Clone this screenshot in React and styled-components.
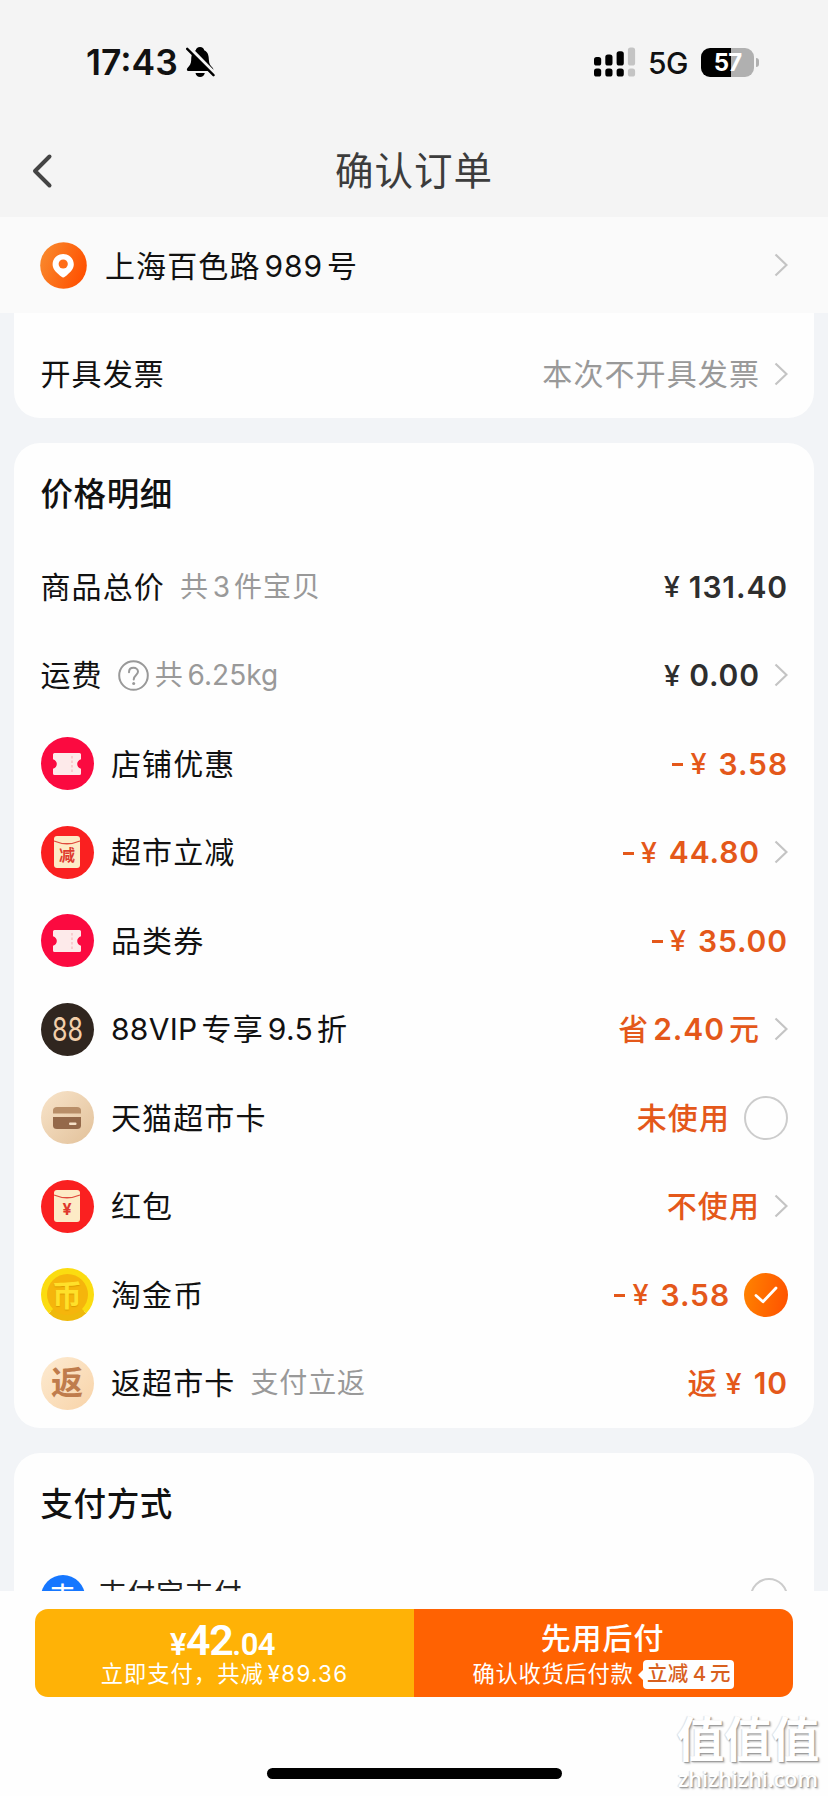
import React from "react";
import styled, { createGlobalStyle } from "styled-components";

const GlobalStyle = createGlobalStyle`
  * {
    box-sizing: border-box;
  }

  body {
    margin: 0;
    background: #f2f4f7;
    color: #111;
    font-family: Inter, "Noto Sans CJK SC", sans-serif;
  }
`;

const Screen = styled.div`
  position: relative;
  display: flex;
  flex-direction: column;
  width: 828px;
  height: 1796px;
  overflow: hidden;
`;

const Header = styled.header`
  height: 217px;
  background: #f4f4f4;
`;

const StatusBar = styled.div`
  display: flex;
  align-items: center;
  height: 124px;
  padding: 0 69px 0 86px;
`;

const Time = styled.span`
  width: 100px;
  padding-top: 1px;
  font-size: 35.5px;
  font-weight: 600;
  line-height: 1;
  white-space: nowrap;
`;

const StatusRight = styled.div`
  display: flex;
  align-items: center;
  margin-left: auto;
`;

const Network = styled.span`
  width: 53px;
  margin-left: 12px;
  padding-top: 1px;
  font-size: 30px;
  font-weight: 500;
  line-height: 1;
  letter-spacing: -0.6px;
`;

const Battery = styled.span`
  width: 53px;
  height: 29px;
  border-radius: 9px;
  background: linear-gradient(90deg, #000 57%, #b0b0b0 57%);
  color: #fff;
  font-size: 24px;
  font-weight: 700;
  line-height: 29px;
  text-align: center;
  letter-spacing: -0.8px;
`;

const BatteryTip = styled.span`
  width: 3px;
  height: 9px;
  margin-left: 2px;
  border-radius: 0 3px 3px 0;
  background: #b0b0b0;
`;

const NavBar = styled.div`
  display: grid;
  grid-template-columns: 60px 1fr 60px;
  align-items: center;
  height: 93px;
  padding: 0 31px;
`;

const NavTitle = styled.h1`
  margin: 0;
  padding-top: 2px;
  color: #3c3c3c;
  font-size: 38.5px;
  font-weight: 400;
  line-height: 1;
  letter-spacing: 1px;
  text-align: center;
`;

const AddressBar = styled.div`
  display: flex;
  align-items: center;
  height: 96px;
  padding: 0 40px;
  background: #fafafa;
`;

const AddressText = styled.span`
  margin: 1px 0 0 18px;
  font-size: 30px;
  line-height: 1;
  letter-spacing: 1.1px;
`;

const Content = styled.main`
  display: flex;
  flex: 1;
  flex-direction: column;
  gap: 25px;
  min-height: 0;
  padding: 0 14px 0 13.5px;
  overflow: hidden;
`;

const Card = styled.section`
  flex: none;
  padding: ${props => (props.$continued ? "17px 26px 1px" : "0 26px 0.5px")} 27px;
  border-radius: ${props => (props.$continued ? "0 0 26px 26px" : "26px")};
  background: #fefefe;
`;

const CardTitle = styled.h2`
  display: flex;
  align-items: center;
  height: 99.5px;
  margin: 0;
  padding-top: 4px;
  font-size: 32.5px;
  font-weight: 500;
  line-height: 1;
  letter-spacing: 0.6px;
`;

const Row = styled.div`
  display: flex;
  align-items: center;
  height: ${props => props.$height || 88.5}px;
`;

const Label = styled.span`
  font-size: 30px;
  line-height: 1;
  letter-spacing: 1.1px;
  white-space: nowrap;
`;

const PayName = styled(Label)`
  margin-bottom: 6px;
  color: #222;
  font-size: 28px;
  letter-spacing: 0.8px;
`;

const Note = styled.span`
  display: flex;
  align-items: center;
  margin-left: 15px;
  color: #999;
  font-size: 28px;
  line-height: 1;
  letter-spacing: 0.9px;
`;

// Latin run set between Chinese characters
const Latin = styled.span`
  margin-left: ${props => (props.$start ? 0 : 4)}px;
  margin-right: ${props => (props.$end ? 0 : 4)}px;
  letter-spacing: ${props => props.$tracking || 0}px;
`;

const Value = styled.span`
  display: flex;
  align-items: center;
  margin-left: auto;
  color: ${props =>
    ({ dark: "#2e2e2e", muted: "#999" }[props.$tone] || "#e4581a")};
  font-size: 30px;
  font-weight: ${props => (props.$tone === "muted" ? 400 : 500)};
  line-height: 1;
  letter-spacing: 1.1px;
  white-space: nowrap;
`;

const Digits = styled.span`
  font-size: 30px;
  font-weight: 600;
  letter-spacing: 0.9px;
`;

const Minus = styled.span`
  width: 11px;
  height: 3px;
  margin: 2px 7px 0 0;
  background: currentColor;
`;

const Yen = styled.span`
  margin-right: ${props => props.$gap}px;
  font-size: 29px;
  font-weight: 500;
  letter-spacing: 0;
`;

const Badge = styled.span`
  display: flex;
  align-items: center;
  justify-content: center;
  width: ${props => props.$size || 53}px;
  height: ${props => props.$size || 53}px;
  margin-right: ${props => props.$gap || 17.5}px;
  flex: none;
  border-radius: 50%;
  background: ${props => props.$bg};
  color: ${props => props.$color};
  font-size: ${props => props.$font}px;
  font-weight: ${props => props.$weight || 500};
  line-height: 1;
`;

const Coin = styled(Badge)`
  border: 6px solid #fbdc10;
  border-bottom-color: #efb90c;
  text-shadow: 0 1px 1px #dc9c00;
`;

const Condensed = styled.span`
  transform: scaleX(0.76);
`;

const Radio = styled.span`
  display: flex;
  align-items: center;
  justify-content: center;
  width: ${props => props.$size || 44}px;
  height: ${props => props.$size || 44}px;
  margin-left: 14px;
  border: ${props => (props.$checked ? "0" : "2px solid #ccc")};
  border-radius: 50%;
  background: ${props =>
    props.$checked ? "linear-gradient(100deg, #ff8400, #ff5000)" : "none"};
`;

const Footer = styled.footer`
  height: 205px;
  padding: 18px 35px 0;
  background: #fefefe;
`;

const PayButtons = styled.div`
  display: flex;
  height: 88px;
  border-radius: 13px;
  overflow: hidden;
`;

const PayButton = styled.button`
  display: flex;
  flex: 1;
  flex-direction: column;
  align-items: center;
  padding: 0;
  border: 0;
  background: ${props => props.$bg};
  color: #fff;
  font-family: inherit;
`;

const Price = styled.span`
  display: flex;
  align-items: baseline;
  height: 50px;
  margin-left: -4px;
  padding-top: 13px;
  font-family: Roboto, sans-serif;
  font-size: 31px;
  font-weight: 600;
  line-height: 37px;
  letter-spacing: -0.5px;

  b {
    font-size: 43px;
    font-weight: 600;
    letter-spacing: -1.4px;
  }
`;

const PayLater = styled.span`
  height: 50px;
  margin-left: -2px;
  font-size: 30px;
  font-weight: 500;
  line-height: 59px;
  letter-spacing: 0.9px;
`;

const PayHint = styled.span`
  display: flex;
  align-items: center;
  height: 30px;
  font-size: 22.3px;
  line-height: 1;
  letter-spacing: ${props => props.$tracking || 0.7}px;
  white-space: nowrap;
`;

const Tag = styled.span`
  position: relative;
  display: flex;
  align-items: center;
  justify-content: center;
  width: 91px;
  height: 29px;
  margin-left: 10px;
  border-radius: 4px;
  background: #fff;
  color: #d8601e;
  font-size: 20.5px;
  font-weight: 500;
  letter-spacing: 0.3px;

  &::before {
    content: "";
    position: absolute;
    left: -5px;
    top: 10px;
    border: 5px solid transparent;
    border-left-width: 0;
    border-right-color: #fff;
  }
`;

const HomeIndicator = styled.div`
  width: 295px;
  height: 11px;
  margin: 71px auto 0;
  border-radius: 6px;
  background: #000;
`;

const Watermark = styled.div`
  position: absolute;
  right: 9px;
  bottom: 3px;
  display: flex;
  flex-direction: column;
  align-items: center;
  width: 142px;
  color: #fff;
  font-size: 47.5px;
  font-weight: 700;
  line-height: 50px;
  white-space: nowrap;
  text-shadow: 1px 1px 1px #999, 2px 2px 2px #ccc, -1px 0 1px #ddd;

  small {
    font-family: "Open Sans", sans-serif;
    font-size: 21.5px;
    font-weight: 600;
    line-height: 28px;
  }
`;

function Chevron() {
  return (
    <svg width="14" height="24" fill="none" style={{ marginLeft: 14 }}>
      <path d="M1.5 1.5L12.5 12L1.5 22.5" stroke="#c4c4c4" strokeWidth="2.2" />
    </svg>
  );
}

function BellOff() {
  return (
    <svg width="29" height="32" viewBox="0 0 29 32">
      <path
        d="M14 1C11.5 1 10 2.7 9.8 4.2C5.8 6 5.3 10 5.2 14C5.1 18 3.7 19.6 1.9 21.4C0.2 23.3 0.8 25 2.8 25H25.4C27.4 25 28 23.3 26.4 21.4C24.4 19.5 23 17.8 22.9 14C22.8 10 22.2 6 18.2 4.2C18 2.7 16.5 1 14 1Z"
        fill="#000"
      />
      <path d="M9.5 27H18.8C18.2 29.5 16.5 31 14.1 31S10 29.5 9.5 27Z" fill="#000" />
      <path d="M1 -0.5L30 29" stroke="#f4f4f4" strokeWidth="4" />
      <path d="M1.2 2.8L27.5 29.2" stroke="#000" strokeWidth="2.4" strokeLinecap="round" />
    </svg>
  );
}

const bars = [
  [0, 10, "#000"],
  [11.3, 7.5, "#000"],
  [22.6, 4.2, "#000"],
  [33.9, 0.5, "#c4c4c4"]
];

function Signal() {
  return (
    <svg width="42" height="30">
      {bars.map(([x, y, fill]) => (
        <g key={x} fill={fill}>
          <rect x={x} y={y} width="7.2" height={18.5 - y} rx="2.6" />
          <rect x={x} y="21.5" width="7.2" height="8" rx="2.6" />
        </g>
      ))}
    </svg>
  );
}

function BackIcon() {
  return (
    <svg width="22" height="36" fill="none">
      <path
        d="M18.5 3.5L4 18L18.5 32.5"
        stroke="#444"
        strokeWidth="4"
        strokeLinecap="round"
        strokeLinejoin="round"
      />
    </svg>
  );
}

function PinIcon() {
  return (
    <svg width="47" height="47">
      <defs>
        <linearGradient id="pin" x1="0" y1="0.2" x2="1" y2="0.6">
          <stop offset="0" stopColor="#f98a2e" />
          <stop offset="1" stopColor="#ff5000" />
        </linearGradient>
      </defs>
      <circle cx="23.5" cy="23.5" r="23.3" fill="url(#pin)" />
      <path
        d="M23.2 12C17.2 12 12.6 16.6 12.6 22.3C12.6 27.2 16 30.2 18.8 32.6C20.6 34.2 22 35.6 23.2 35.6S25.8 34.2 27.6 32.6C30.4 30.2 33.8 27.2 33.8 22.3C33.8 16.6 29.2 12 23.2 12Z"
        fill="#fff"
      />
      <circle cx="23.2" cy="22" r="4.6" fill="#ff6d17" />
    </svg>
  );
}

function HelpIcon() {
  return (
    <svg width="31" height="31" fill="none" stroke="#999" strokeWidth="2">
      <circle cx="15.5" cy="15.5" r="14.3" />
      <path
        d="M11 12.2C11 9.4 12.9 7.8 15.5 7.8S20 9.5 20 11.8C20 14.8 15.7 15.2 15.7 19.4"
        strokeLinecap="round"
      />
      <circle cx="15.7" cy="23.6" r="1.5" fill="#999" stroke="none" />
    </svg>
  );
}

function Ticket() {
  return (
    <Badge $bg="#fb0a40">
      <svg width="30" height="24">
        <path
          d="M2.5 1H27.5Q29 1 29 2.5V7.2Q25.2 8.6 25.2 12T29 16.8V21.5Q29 23 27.5 23H2.5Q1 23 1 21.5V16.8Q4.8 15.4 4.8 12T1 7.2V2.5Q1 1 2.5 1Z"
          fill="#fdeaea"
        />
        <path d="M20 4V21" stroke="#f9c4c8" strokeWidth="1.6" strokeDasharray="2.5 2" />
      </svg>
    </Badge>
  );
}

function Envelope({ text, size }) {
  return (
    <Badge $bg="#fa2020">
      <svg width="28" height="34">
        <rect x="1" y="1" width="26" height="32" rx="3" fill="#fdebc6" />
        <path d="M1 6Q14 11.5 27 6" fill="none" stroke="#df4a3d" strokeWidth="1.3" />
        <text
          x="14"
          y="25.5"
          fill="#df392e"
          fontSize={size}
          fontWeight="700"
          textAnchor="middle"
        >
          {text}
        </text>
      </svg>
    </Badge>
  );
}

function CardIcon() {
  return (
    <Badge $bg="linear-gradient(135deg, #f8e4ca, #e2c19a)">
      <svg width="28" height="24">
        <path d="M0 7.5V4.5Q0 1 4 1H24Q28 1 28 4.5V7.5Z" fill="#b88e68" />
        <path d="M0 11H28V19.5Q28 23 24 23H4Q0 23 0 19.5Z" fill="#94694a" />
        <rect x="16" y="16.5" width="7.5" height="2.4" rx="1" fill="#f6e1c8" />
      </svg>
    </Badge>
  );
}

function CheckIcon() {
  return (
    <svg width="24" height="18" fill="none">
      <path
        d="M2 9.5L9 15.8L22 2"
        stroke="#fff"
        strokeWidth="2.8"
        strokeLinecap="round"
        strokeLinejoin="round"
      />
    </svg>
  );
}

function Amount({ minus, gap = 12, children }) {
  return (
    <>
      {minus && <Minus />}
      <Yen $gap={gap}>¥</Yen>
      <Digits>{children}</Digits>
    </>
  );
}

const discounts = [
  {
    id: "shop",
    icon: <Ticket />,
    label: "店铺优惠",
    value: <Amount minus>3.58</Amount>
  },
  {
    id: "market",
    icon: <Envelope text="减" size={16} />,
    label: "超市立减",
    value: <Amount minus>44.80</Amount>,
    end: <Chevron />
  },
  {
    id: "category",
    icon: <Ticket />,
    label: "品类券",
    value: <Amount minus>35.00</Amount>
  },
  {
    id: "vip",
    icon: (
      <Badge $bg="#30261f" $color="#f2cfaa" $font="33" $weight="400">
        <Condensed>88</Condensed>
      </Badge>
    ),
    label: (
      <>
        <Latin $start $tracking="0.3">
          88VIP
        </Latin>
        专享
        <Latin $tracking="0.3">9.5</Latin>折
      </>
    ),
    value: (
      <>
        省
        <Latin>
          <Digits>2.40</Digits>
        </Latin>
        元
      </>
    ),
    end: <Chevron />
  },
  {
    id: "card",
    icon: <CardIcon />,
    label: "天猫超市卡",
    value: "未使用",
    end: <Radio />
  },
  {
    id: "redpacket",
    icon: <Envelope text="¥" size={16} />,
    label: "红包",
    value: "不使用",
    end: <Chevron />
  },
  {
    id: "coin",
    icon: (
      <Coin $bg="#f5b50c" $color="#ffe02a" $font="30" $weight="700">
        币
      </Coin>
    ),
    label: "淘金币",
    value: <Amount minus>3.58</Amount>,
    end: (
      <Radio $checked>
        <CheckIcon />
      </Radio>
    )
  },
  {
    id: "rebate",
    icon: (
      <Badge
        $bg="linear-gradient(135deg, #fdebd2, #f8d3a8)"
        $color="#bf7c4c"
        $font="32"
        $weight="700"
      >
        返
      </Badge>
    ),
    label: "返超市卡",
    note: "支付立返",
    value: (
      <>
        <span style={{ marginRight: 7 }}>返</span>
        <Amount>10</Amount>
      </>
    )
  }
];

export default function App() {
  return (
    <Screen>
      <GlobalStyle />
      <Header>
        <StatusBar>
          <Time>17:43</Time>
          <BellOff />
          <StatusRight>
            <Signal />
            <Network>5G</Network>
            <Battery>57</Battery>
            <BatteryTip />
          </StatusRight>
        </StatusBar>
        <NavBar>
          <BackIcon />
          <NavTitle>确认订单</NavTitle>
        </NavBar>
      </Header>
      <AddressBar>
        <PinIcon />
        <AddressText>
          上海百色路<Latin $tracking="0.9">989</Latin>号
        </AddressText>
        <Value>
          <Chevron />
        </Value>
      </AddressBar>
      <Content>
        <Card $continued>
          <Row $height={87}>
            <Label>开具发票</Label>
            <Value $tone="muted">
              本次不开具发票
              <Chevron />
            </Value>
          </Row>
        </Card>
        <Card>
          <CardTitle>价格明细</CardTitle>
          <Row>
            <Label>商品总价</Label>
            <Note>
              共<Latin>3</Latin>件宝贝
            </Note>
            <Value $tone="dark">
              <Amount gap={9}>131.40</Amount>
            </Value>
          </Row>
          <Row>
            <Label>运费</Label>
            <Note>
              <HelpIcon />
              <span style={{ marginLeft: 6 }}>共</span>
              <Latin $end>6.25kg</Latin>
            </Note>
            <Value $tone="dark">
              <Amount gap={9}>0.00</Amount>
              <Chevron />
            </Value>
          </Row>
          {discounts.map(item => (
            <Row key={item.id}>
              {item.icon}
              <Label>{item.label}</Label>
              {item.note && <Note>{item.note}</Note>}
              <Value>
                {item.value}
                {item.end}
              </Value>
            </Row>
          ))}
        </Card>
        <Card>
          <CardTitle>支付方式</CardTitle>
          <Row>
            <Badge $size="44" $gap="14" $bg="#1677ff" $color="#fff" $font="25">
              支
            </Badge>
            <PayName>支付宝支付</PayName>
            <Value>
              <Radio $size="38" />
            </Value>
          </Row>
        </Card>
      </Content>
      <Footer>
        <PayButtons>
          <PayButton $bg="#ffb206">
            <Price>
              ¥<b>42</b>.04
            </Price>
            <PayHint $tracking="1">
              立即支付，共减
              <Latin $end $tracking="1.3">
                ¥89.36
              </Latin>
            </PayHint>
          </PayButton>
          <PayButton $bg="#ff6202">
            <PayLater>先用后付</PayLater>
            <PayHint>
              确认收货后付款
              <Tag>
                立减<Latin>4</Latin>元
              </Tag>
            </PayHint>
          </PayButton>
        </PayButtons>
        <HomeIndicator />
      </Footer>
      <Watermark>
        值值值
        <small>zhizhizhi.com</small>
      </Watermark>
    </Screen>
  );
}
